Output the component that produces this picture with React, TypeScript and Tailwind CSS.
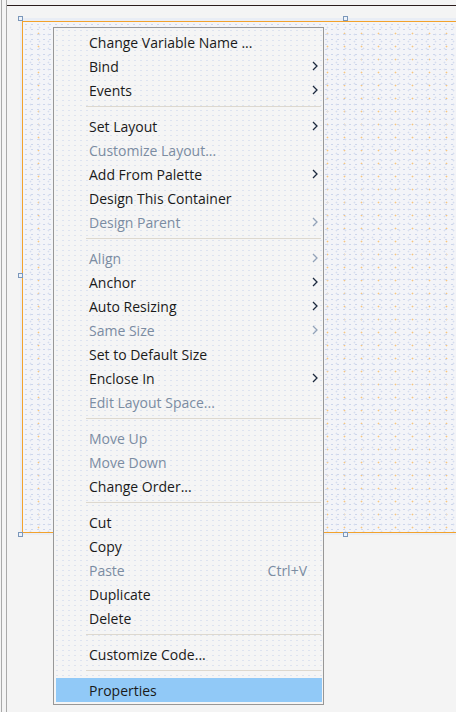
import React from 'react';

type Entry =
  | { kind: 'sep' }
  | { kind: 'item'; label: string; disabled?: boolean; submenu?: boolean; shortcut?: string; active?: boolean };

const sep: Entry = { kind: 'sep' };
const item = (label: string, opts: Partial<Omit<Extract<Entry, { kind: 'item' }>, 'kind' | 'label'>> = {}): Entry => ({
  kind: 'item',
  label,
  ...opts,
});

const MENU: Entry[] = [
  item('Change Variable Name ...'),
  item('Bind', { submenu: true }),
  item('Events', { submenu: true }),
  sep,
  item('Set Layout', { submenu: true }),
  item('Customize Layout...', { disabled: true }),
  item('Add From Palette', { submenu: true }),
  item('Design This Container'),
  item('Design Parent', { disabled: true, submenu: true }),
  sep,
  item('Align', { disabled: true, submenu: true }),
  item('Anchor', { submenu: true }),
  item('Auto Resizing', { submenu: true }),
  item('Same Size', { disabled: true, submenu: true }),
  item('Set to Default Size'),
  item('Enclose In', { submenu: true }),
  item('Edit Layout Space...', { disabled: true }),
  sep,
  item('Move Up', { disabled: true }),
  item('Move Down', { disabled: true }),
  item('Change Order...'),
  sep,
  item('Cut'),
  item('Copy'),
  item('Paste', { disabled: true, shortcut: 'Ctrl+V' }),
  item('Duplicate'),
  item('Delete'),
  sep,
  item('Customize Code...'),
  sep,
  item('Properties', { active: true }),
];

const Chevron = ({ disabled }: { disabled?: boolean }) => (
  <svg width="6" height="10" viewBox="0 0 6 10" className="shrink-0">
    <path
      d="M1 1 L5 5 L1 9"
      fill="none"
      stroke={disabled ? '#93a3b8' : '#1d2a3e'}
      strokeWidth="1.3"
    />
  </svg>
);

const Handle = ({ className }: { className: string }) => (
  <div className={`absolute h-[5px] w-[5px] border border-[#7b97ba] bg-[#eef3fa] ${className}`} />
);

export default function App() {
  return (
    <div className="relative h-[712px] w-[456px] overflow-hidden bg-[#f4f4f4] font-['Segoe_UI','Open_Sans',sans-serif] text-[14px]">
      {/* editor frame lines */}
      <div className="ml-[1px] h-full border-l border-[#a9a9a9]">
        <div className="ml-[4px] h-full border-l border-[#a9a9a9] pt-[5px]">
          <div className="h-full border-t border-[#2a1c1c] pl-[13px] pt-[12px]">
            {/* selected container on the design surface */}
            <div className="bg-[#e9edf5] pb-[2px] pl-[2px] pt-[3px]">
              <div className="h-[512px] border-y border-l border-[#f2a22c] bg-[#f3f4f8] bg-[radial-gradient(circle,#cdd6ec_0.8px,transparent_1.1px),radial-gradient(circle,#d6ddef_0.8px,transparent_1.1px),radial-gradient(circle,#f7c680_0.8px,transparent_1.1px)] bg-[size:6px_5px,9px_7px,17px_13px] bg-[position:0_0,3px_2px,7px_5px]" />
            </div>
          </div>
        </div>
      </div>

      <Handle className="left-[18px] top-[16px]" />
      <Handle className="left-[343px] top-[16px]" />
      <Handle className="left-[18px] top-[273px]" />
      <Handle className="left-[18px] top-[532px]" />
      <Handle className="left-[343px] top-[532px]" />

      {/* context menu */}
      <div className="absolute left-[53px] top-[27px] flex h-[678px] w-[271px] flex-col border border-[#979797] bg-[#f5f5f5] bg-[radial-gradient(circle,#dde3f0_0.7px,transparent_1px)] bg-[size:6px_5px] pl-[2px] pr-[1px] pt-[2px]">
        {MENU.map((e, i) =>
          e.kind === 'sep' ? (
            <div key={i} className="h-[12px] pt-[4px]">
              <div className="ml-[30px] mr-[1px] h-px bg-[#ddd8cf]" />
            </div>
          ) : (
            <div
              key={i}
              className={`flex h-[24px] items-center pl-[33px] pr-[4px] ${e.active ? 'bg-[#91c9f7]' : ''} ${
                e.disabled ? 'text-[#7b8ca2]' : 'text-[#1a1a1a]'
              }`}
            >
              <span className="flex-1 whitespace-nowrap">{e.label}</span>
              {e.shortcut && <span className="mr-[11px] whitespace-nowrap">{e.shortcut}</span>}
              {e.submenu && <Chevron disabled={e.disabled} />}
            </div>
          )
        )}
      </div>
    </div>
  );
}
